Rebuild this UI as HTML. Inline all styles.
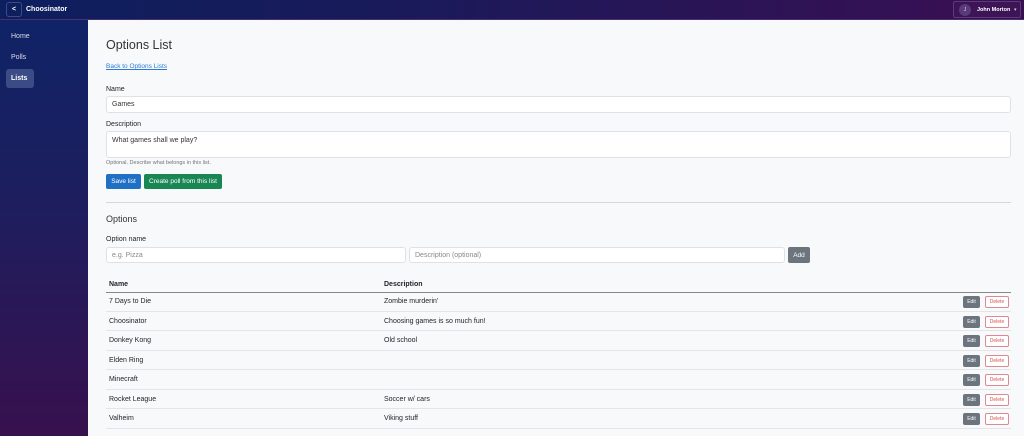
<!DOCTYPE html>
<html><head><style>
*{box-sizing:border-box;margin:0;padding:0}
body{width:1024px;height:436px;overflow:hidden;font-family:"Liberation Sans",sans-serif;font-size:7px;color:#212529;background:#f8f9fa;position:relative}
.top{position:absolute;left:0;top:0;width:1024px;height:20px;background:linear-gradient(90deg,#0d1f5e 0%,#1a1a5a 40%,#3a0f52 100%);border-bottom:1px solid #4a3070}
.back{position:absolute;left:6px;top:2px;width:16px;height:15px;border:1px solid #3a4a8a;border-radius:3px;color:#fff;font-size:7px;display:flex;align-items:center;justify-content:center;font-weight:bold}
.brand{position:absolute;left:26px;top:6px;color:#fff;font-weight:bold;font-size:7px}
.user{position:absolute;left:953px;top:1px;width:68px;height:17px;border:1px solid #5a3a7a;border-radius:2px;background:#3d1556}
.av{position:absolute;left:5px;top:2px;width:12px;height:12px;border-radius:50%;background:#5a3a78;color:#ddd;font-size:5px;display:flex;align-items:center;justify-content:center}
.un{position:absolute;left:23px;top:5px;color:#fff;font-size:5.5px;font-weight:bold}
.car{position:absolute;left:60px;top:5px;color:#ccc;font-size:5px}
.side{position:absolute;left:0;top:20px;width:88px;height:416px;background:linear-gradient(180deg,#0f2366 0%,#1e1e5e 45%,#38104e 100%)}
.nav{position:absolute;left:6px;width:28px;height:19px;color:#dde;font-size:7px;padding-left:5px;display:flex;align-items:center}
.nav.a{background:#3b4b86;border-radius:3px;color:#fff;font-weight:bold}
.main{position:absolute;left:88px;top:20px;width:936px;height:416px;background:#f8f9fa}
.abs{position:absolute}
h1{position:absolute;left:106px;top:38px;font-size:12.5px;font-weight:normal;color:#333}
a{color:#2a7bd8;text-decoration:underline}
.inp{position:absolute;background:#fff;border:1px solid #dee2e6;border-radius:3px;padding:0 5px;color:#333;display:flex;align-items:center}
.ph{color:#888}
.btn{position:absolute;color:#fff;border-radius:2px;font-size:6.5px;display:flex;align-items:center;justify-content:center}
.row{position:absolute;left:106px;width:905px;height:19.5px;border-bottom:1px solid #e3e5e8}
.row span{position:absolute;top:6px}
.e{position:absolute;left:857px;top:4px;width:17px;height:12px;background:#6c757d;border-radius:2px;color:#fff;font-size:5px;display:flex;align-items:center;justify-content:center}
.d{position:absolute;left:879px;top:4px;width:24px;height:12px;border:1px solid #e08890;border-radius:2px;color:#d9534f;font-size:5px;display:flex;align-items:center;justify-content:center;background:#fff}
</style></head><body>
<div class="top"><div class="back">&lt;</div><div class="brand">Choosinator</div>
<div class="user"><div class="av">J</div><div class="un">John Morton</div><div class="car">▾</div></div></div>
<div class="side">
<div class="nav" style="top:7px">Home</div>
<div class="nav" style="top:28px">Polls</div>
<div class="nav a" style="top:49px">Lists</div>
</div>
<div class="main"></div>
<h1>Options List</h1>
<a class="abs" style="left:106px;top:63px;font-size:6.5px">Back to Options Lists</a>
<div class="abs" style="left:106px;top:86px">Name</div>
<div class="inp" style="left:106px;top:96px;width:905px;height:17px">Games</div>
<div class="abs" style="left:106px;top:121px">Description</div>
<div class="inp" style="left:106px;top:131px;width:905px;height:27px;align-items:flex-start;padding-top:5px">What games shall we play?</div>
<div class="abs" style="left:106px;top:160px;font-size:5.5px;color:#6c757d">Optional. Describe what belongs in this list.</div>
<div class="btn" style="left:106px;top:174px;width:35px;height:15px;background:#1f6fc5">Save list</div>
<div class="btn" style="left:144px;top:174px;width:78px;height:15px;background:#198754">Create poll from this list</div>
<div class="abs" style="left:106px;top:202px;width:905px;height:1px;background:#d5d8db"></div>
<div class="abs" style="left:106px;top:214px;font-size:9px;color:#333">Options</div>
<div class="abs" style="left:106px;top:236px">Option name</div>
<div class="inp" style="left:106px;top:247px;width:300px;height:16px"><span class="ph">e.g. Pizza</span></div>
<div class="inp" style="left:409px;top:247px;width:376px;height:16px"><span class="ph">Description (optional)</span></div>
<div class="btn" style="left:788px;top:247px;width:22px;height:16px;background:#6c757d">Add</div>
<div class="abs" style="left:109px;top:281px;font-weight:bold">Name</div>
<div class="abs" style="left:384px;top:281px;font-weight:bold">Description</div>
<div class="abs" style="left:106px;top:292px;width:905px;height:1px;background:#888"></div>
<div class="row" style="top:292px"><span style="left:3px">7 Days to Die</span><span style="left:278px">Zombie murderin'</span><div class="e">Edit</div><div class="d">Delete</div></div>
<div class="row" style="top:311.5px"><span style="left:3px">Choosinator</span><span style="left:278px">Choosing games is so much fun!</span><div class="e">Edit</div><div class="d">Delete</div></div>
<div class="row" style="top:331px"><span style="left:3px">Donkey Kong</span><span style="left:278px">Old school</span><div class="e">Edit</div><div class="d">Delete</div></div>
<div class="row" style="top:350.5px"><span style="left:3px">Elden Ring</span><div class="e">Edit</div><div class="d">Delete</div></div>
<div class="row" style="top:370px"><span style="left:3px">Minecraft</span><div class="e">Edit</div><div class="d">Delete</div></div>
<div class="row" style="top:389.5px"><span style="left:3px">Rocket League</span><span style="left:278px">Soccer w/ cars</span><div class="e">Edit</div><div class="d">Delete</div></div>
<div class="row" style="top:409px"><span style="left:3px">Valheim</span><span style="left:278px">Viking stuff</span><div class="e">Edit</div><div class="d">Delete</div></div>
</body></html>
